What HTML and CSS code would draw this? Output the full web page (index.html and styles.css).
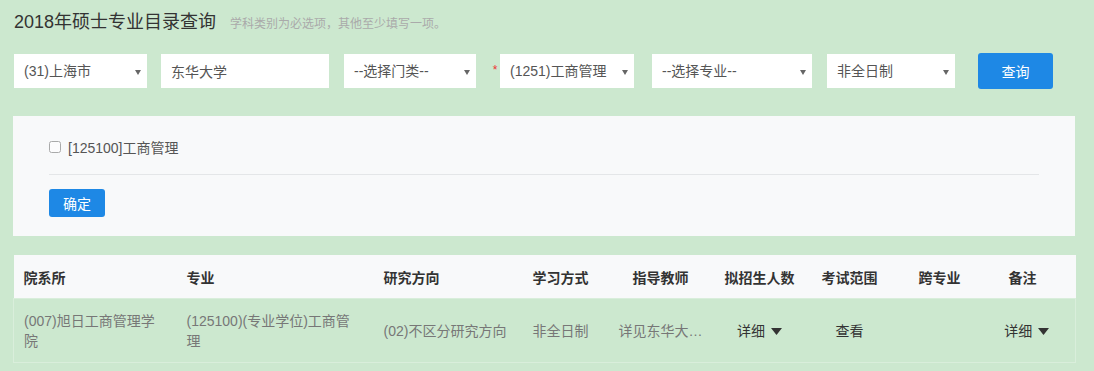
FILE: index.html
```html
<!DOCTYPE html>
<html lang="zh-CN">
<head>
    <meta charset="UTF-8">
    <meta name="viewport" content="width=device-width, initial-scale=1.0">
    <title>2018年硕士专业目录查询</title>
    <link rel="stylesheet" href="styles.css">
</head>
<body>
    <div class="page">
        <div class="title-bar">
            <h1>2018年硕士专业目录查询</h1>
            <span class="hint">学科类别为必选项，其他至少填写一项。</span>
        </div>

        <!-- Search form -->
        <form class="search-form" onsubmit="return false;">
            <div class="select-box w-ssdm">
                <select><option>(31)上海市</option></select>
            </div>
            <input type="text" class="text-box w-dwmc" value="东华大学">
            <div class="select-box w-mldm">
                <select><option>--选择门类--</option></select>
            </div>
            <span class="required">*</span>
            <div class="select-box w-yjxk">
                <select><option>(1251)工商管理</option></select>
            </div>
            <div class="select-box w-zy">
                <select><option>--选择专业--</option></select>
            </div>
            <div class="select-box w-xxfs">
                <select><option>非全日制</option></select>
            </div>
            <button type="button" class="btn btn-search">查询</button>
        </form>

        <!-- Major picker -->
        <div class="major-panel">
            <label class="major-item">
                <input type="checkbox">
                <span>[125100]工商管理</span>
            </label>
            <div class="divider"></div>
            <button type="button" class="btn btn-confirm">确定</button>
        </div>

        <!-- Result table -->
        <table class="result-table">
            <colgroup>
                <col class="c1"><col class="c2"><col class="c3"><col class="c4"><col class="c5">
                <col class="c6"><col class="c7"><col class="c8"><col class="c9">
            </colgroup>
            <thead>
                <tr>
                    <th class="left">院系所</th>
                    <th class="left">专业</th>
                    <th class="left">研究方向</th>
                    <th>学习方式</th>
                    <th>指导教师</th>
                    <th>拟招生人数</th>
                    <th>考试范围</th>
                    <th>跨专业</th>
                    <th class="last">备注</th>
                </tr>
            </thead>
            <tbody>
                <tr>
                    <td class="left wrap">(007)旭日工商管理学院</td>
                    <td class="left wrap">(125100)(专业学位)工商管理</td>
                    <td class="left narrow">(02)不区分研究方向</td>
                    <td>非全日制</td>
                    <td><span class="clip">详见东华大…</span></td>
                    <td><a class="dropdown">详细<svg class="caret" width="11" height="7" viewBox="0 0 11 7"><path d="M0 0h11L5.5 7z" fill="#333"/></svg></a></td>
                    <td><a class="link">查看</a></td>
                    <td></td>
                    <td><a class="dropdown">详细<svg class="caret" width="11" height="7" viewBox="0 0 11 7"><path d="M0 0h11L5.5 7z" fill="#333"/></svg></a></td>
                </tr>
            </tbody>
        </table>
    </div>
</body>
</html>
```

FILE: styles.css
```css
body {
    margin: 0;
    background-color: #cce8cf;
    font-family: "Liberation Sans", "Noto Sans CJK SC", sans-serif;
    font-size: 14px;
    color: #555;
}
.page {
    padding: 10px 19px 0 13px;
}
.title-bar {
    display: flex;
    align-items: baseline;
    padding-left: 1px;
}
h1 {
    margin: 0;
    font-size: 18px;
    font-weight: normal;
    line-height: 25px;
    color: #333;
}
.hint {
    margin-left: 14px;
    font-size: 12px;
    color: #aaa;
}

/* search form */
.search-form {
    display: flex;
    align-items: center;
    margin-top: 18px;
    padding-left: 1px;
}
.select-box {
    position: relative;
    height: 34px;
    background-color: #fff;
}
.select-box select {
    width: 100%;
    height: 34px;
    padding: 0 20px 0 10px;
    border: none;
    background: transparent;
    font-family: inherit;
    font-size: 14px;
    color: #555;
    appearance: none;
    -webkit-appearance: none;
    outline: none;
}
.select-box::after {
    content: "";
    position: absolute;
    right: 6px;
    top: 16px;
    border-left: 3px solid transparent;
    border-right: 3px solid transparent;
    border-top: 5px solid #666;
    pointer-events: none;
}
.text-box {
    box-sizing: border-box;
    height: 34px;
    padding: 0 10px;
    border: none;
    background-color: #fff;
    font-family: inherit;
    font-size: 14px;
    color: #555;
    outline: none;
}
.w-ssdm { width: 133px; }
.w-dwmc { width: 168px; margin-left: 14px; }
.w-mldm { width: 132px; margin-left: 15px; }
.w-yjxk { width: 134px; }
.w-zy { width: 160px; margin-left: 18px; }
.w-xxfs { width: 128px; margin-left: 15px; }
.required {
    width: 10px;
    margin-left: 14px;
    color: #e33;
    font-size: 12px;
    text-align: center;
    align-self: flex-start;
    margin-top: 10px;
}
.btn {
    border: none;
    border-radius: 3px;
    background-color: #1e88e5;
    color: #fff;
    font-family: inherit;
    font-size: 14px;
    cursor: pointer;
}
.btn-search {
    width: 75px;
    height: 36px;
    margin-left: 23px;
}

/* major panel */
.major-panel {
    margin-top: 27px;
    padding: 22px 36px 19px;
    background-color: #f8f9fa;
}
.major-item {
    display: flex;
    align-items: center;
    height: 18px;
    color: #555;
}
.major-item input {
    width: 12px;
    height: 12px;
    margin: 0 7px 0 0;
    opacity: 0.6;
}
.divider {
    height: 1px;
    margin: 18px 0 14px;
    background-color: #e4e6e8;
}
.btn-confirm {
    display: block;
    width: 56px;
    height: 28px;
}

/* result table */
.result-table {
    width: 1062px;
    margin-top: 19px;
    border-collapse: collapse;
    table-layout: fixed;
}
.c1 { width: 163px; }
.c2 { width: 197px; }
.c3 { width: 147px; }
.c4 { width: 80px; }
.c5 { width: 120px; }
.c6 { width: 78px; }
.c7 { width: 102px; }
.c8 { width: 78px; }
.c9 { width: 97px; }
.result-table th {
    height: 43px;
    padding: 0 4px;
    background-color: #f8f9fa;
    color: #333;
    font-weight: bold;
    text-align: center;
}
.result-table td {
    height: 63px;
    padding: 0 4px;
    line-height: 20px;
    color: #777;
    text-align: center;
    vertical-align: middle;
    border-top: 1px solid #d9eedb;
    border-bottom: 1px solid #d9eedb;
}
.result-table td:first-child {
    border-left: 1px solid #d9eedb;
}
.result-table td:last-child {
    border-right: 1px solid #d9eedb;
}
.result-table .left {
    padding-left: 10px;
    text-align: left;
}
.result-table .wrap {
    padding-right: 20px;
}
.result-table .narrow {
    padding-right: 10px;
}
.result-table th.last {
    padding-right: 13px;
}
.clip {
    white-space: nowrap;
}
.dropdown, .link {
    color: #333;
    cursor: pointer;
    white-space: nowrap;
}
.caret {
    margin-left: 6px;
    vertical-align: middle;
}
```
